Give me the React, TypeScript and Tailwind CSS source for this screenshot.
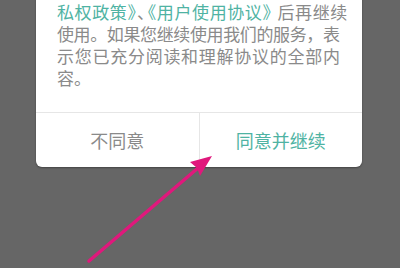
import React from "react";

const lineCls = "h-[22px] leading-[22px] whitespace-nowrap [text-spacing-trim:space-all]";

export default function App() {
  return (
    <div className="relative h-[268px] w-[400px] overflow-hidden bg-[#666666] font-['Noto_Sans_CJK_SC',sans-serif]">
      {/* Dialog card */}
      <div className="-mt-[20px] ml-[36px] w-[326px] rounded-b-[6px] bg-white shadow-[0_1px_2px_rgba(0,0,0,0.35)]">
        <div className="px-[21px] pt-[21px] pb-[23px] text-[17px] text-[#8a8a8a]">
          <div className={lineCls}>
            <span className="text-[#4fb3a3] tracking-[0.6px]">私权政策</span>
            <span className="text-[#4fb3a3] tracking-[-7.4px]">》</span>
            <span className="tracking-[-7.4px]">、</span>
            <span className="-ml-[7.4px] text-[#4fb3a3] tracking-[0.6px]">《用户使用协议</span>
            <span className="text-[#4fb3a3] tracking-[-2px]">》</span>
            <span className="tracking-[0.6px]">后再继续</span>
          </div>
          <div className={`${lineCls} tracking-[-0.375px]`}>使用。如果您继续使用我们的服务，表</div>
          <div className={`${lineCls} tracking-[0.73px]`}>示您已充分阅读和理解协议的全部内</div>
          <div className={lineCls}>容。</div>
        </div>

        {/* Buttons */}
        <div className="flex h-[55px] border-t border-[#e6e6e6]">
          <button className="flex flex-1 items-center justify-center text-[18px] text-[#8a8a8a]">
            不同意
          </button>
          <button className="flex flex-1 items-center justify-center border-l border-[#e6e6e6] text-[18px] text-[#4fb3a3]">
            同意并继续
          </button>
        </div>
      </div>

      {/* Annotation arrow */}
      <svg
        className="pointer-events-none absolute left-0 top-0"
        width="400"
        height="268"
        viewBox="0 0 400 268"
      >
        <line
          x1="89"
          y1="261"
          x2="198"
          y2="168"
          stroke="#e0187c"
          strokeWidth="3.5"
          strokeLinecap="round"
        />
        <path d="M212 156 L190 162 L197 168 L200 176 Z" fill="#e0187c" />
      </svg>
    </div>
  );
}
